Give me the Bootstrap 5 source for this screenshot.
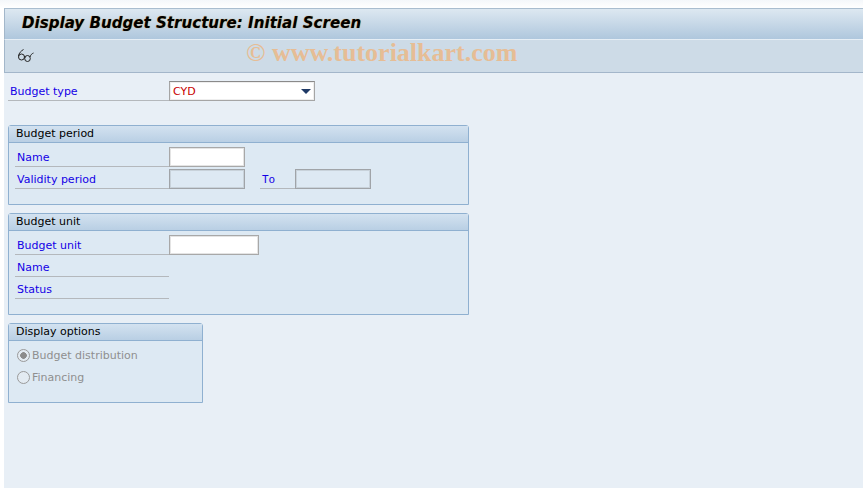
<!DOCTYPE html>
<html lang="en">
<head>
  <meta charset="UTF-8">
  <title>Display Budget Structure: Initial Screen</title>
  <link href="https://cdn.jsdelivr.net/npm/bootstrap@5.3.0/dist/css/bootstrap.min.css" rel="stylesheet">
  <style>
    html, body { height: 100%; }
    body {
      background: #fff;
      font-family: "DejaVu Sans", sans-serif;
      font-size: 11px;
      line-height: 16px;
      overflow: hidden;
    }
    .sap-shell { height: 488px; padding: 8px 0 0 4px; background: linear-gradient(#f4f7fa, #fff 8px); }
    .sap-title {
      height: 32px;
      padding-left: 17px;
      background: linear-gradient(#dde8f1, #afc7dd);
      border-top: 1px solid #a9bdcf;
      border-left: 1px solid #a3b7ca;
      border-bottom: 1px solid #e6eef5;
      font-size: 15px;
      font-weight: 700;
      font-style: italic;
      letter-spacing: .05px;
      line-height: 28px;
      color: #000;
      text-shadow: 0 0 1px #c08a30;
    }
    .sap-toolbar {
      height: 33px;
      padding-left: 12px;
      background: #cddbe7;
      border-left: 1px solid #a3b7ca;
      border-bottom: 1px solid #a3b6ca;
      position: relative;
    }
    .sap-mark {
      position: absolute;
      left: 241px;
      top: 0;
      font-family: "Liberation Serif", serif;
      font-size: 26px;
      font-weight: 700;
      line-height: 25px;
      color: #e6bd95;
      white-space: nowrap;
    }
    .sap-main { height: 415px; background: #e8eff6; padding: 8px 0 0 4px; }
    .sap-row { height: 22px; }
    .sap-label {
      flex: none;
      width: 154px;
      height: 20px;
      padding: 1px 0 0 2px;
      color: #1400e6;
      border-bottom: 1px solid #b4b8bc;
      line-height: 20px;
    }
    .sap-top { margin-bottom: 22px; }
    .sap-top .sap-label { width: 161px; }
    .sap-select {
      flex: none;
      width: 146px;
      height: 20px;
      padding-left: 3px;
      background: #fff;
      border: 1px solid #a5a5a5;
      border-top-color: #8a8a8a;
      box-shadow: inset 0 0 0 1px #eee;
      color: #c80000;
      line-height: 17px;
    }
    .sap-caret {
      width: 0;
      height: 0;
      border-left: 5px solid transparent;
      border-right: 5px solid transparent;
      border-top: 5px solid #1f3a66;
      margin-right: 3px;
    }
    .sap-group {
      background: #dde9f3;
      border: 1px solid #8fb0d0;
      border-radius: 3px 3px 0 0;
      margin-bottom: 8px;
    }
    .sap-wide { width: 461px; }
    .sap-h80 { height: 80px; }
    .sap-h102 { height: 102px; }
    .sap-narrow { width: 195px; }
    .sap-head {
      height: 17px;
      padding-left: 7px;
      background: linear-gradient(#d3e2f0, #b9cfe4);
      border-bottom: 1px solid #8fb0d0;
      color: #000;
      line-height: 15px;
    }
    .sap-body { padding: 4px 0 0 6px; }
    .sap-body-tight { padding-top: 3px; }
    .sap-input {
      flex: none;
      height: 20px;
      background: #fff;
      border: 1px solid #a8a8a8;
      box-shadow: inset 0 0 0 1px #e4e4e4;
    }
    .sap-input-off { background: #dde9f3; border-color: #a0a4a8; box-shadow: inset 0 0 0 1px #c8d2da; }
    .sap-w76 { width: 76px; }
    .sap-w90 { width: 90px; }
    .sap-to { width: 35px; margin-left: 15px; font-family: "DejaVu Sans Mono", monospace; }
    .sap-radio {
      flex: none;
      width: 13px;
      height: 13px;
      border: 1px solid #9a9a9a;
      border-radius: 50%;
      background: #e3ebf2;
      margin-right: 2px;
    }
    .sap-radio-on { background: radial-gradient(circle, #8c8c8c 0 3px, #e3ebf2 3.6px); }
    .sap-off { color: #8f8f8f; padding-left: 2px; }
    .sap-radio-text { padding-top: 2px; }
  </style>
</head>
<body>
  <div class="sap-shell">
    <div class="sap-title">Display Budget Structure: Initial Screen</div>
    <div class="sap-toolbar d-flex align-items-center">
      <!-- glasses icon -->
      <svg width="17" height="16" viewBox="0 0 17 16" fill="none" stroke="#222" stroke-width="1">
        <path d="M1.500 8C2 5 4 3 6.500 1.500"/>
        <ellipse cx="4.500" cy="9" rx="3" ry="3"/>
        <ellipse cx="10.500" cy="10.500" rx="2.800" ry="3"/>
        <path d="M7.500 8.500L8.500 9M13 9C13.500 7 15 5.500 16.500 5"/>
      </svg>
      <div class="sap-mark">© www.tutorialkart.com</div>
    </div>
    <div class="sap-main">
      <div class="sap-top sap-row d-flex">
        <div class="sap-label">Budget type</div>
        <div class="sap-select d-flex justify-content-between align-items-center">CYD<span class="sap-caret"></span></div>
      </div>

      <div class="sap-group sap-wide sap-h80">
        <div class="sap-head">Budget period</div>
        <div class="sap-body">
          <div class="sap-row d-flex">
            <div class="sap-label">Name</div>
            <div class="sap-input sap-w76"></div>
          </div>
          <div class="sap-row d-flex">
            <div class="sap-label">Validity period</div>
            <div class="sap-input sap-input-off sap-w76"></div>
            <div class="sap-label sap-to">To</div>
            <div class="sap-input sap-input-off sap-w76"></div>
          </div>
        </div>
      </div>

      <div class="sap-group sap-wide sap-h102">
        <div class="sap-head">Budget unit</div>
        <div class="sap-body">
          <div class="sap-row d-flex">
            <div class="sap-label">Budget unit</div>
            <div class="sap-input sap-w90"></div>
          </div>
          <div class="sap-row d-flex"><div class="sap-label">Name</div></div>
          <div class="sap-row d-flex"><div class="sap-label">Status</div></div>
        </div>
      </div>

      <div class="sap-group sap-narrow sap-h80">
        <div class="sap-head">Display options</div>
        <div class="sap-body sap-body-tight">
          <div class="sap-row d-flex align-items-center sap-off"><span class="sap-radio sap-radio-on"></span><span class="sap-radio-text">Budget distribution</span></div>
          <div class="sap-row d-flex align-items-center sap-off"><span class="sap-radio"></span><span class="sap-radio-text">Financing</span></div>
        </div>
      </div>
    </div>
  </div>
  <script src="https://cdn.jsdelivr.net/npm/bootstrap@5.3.0/dist/js/bootstrap.bundle.min.js"></script>
</body>
</html>
